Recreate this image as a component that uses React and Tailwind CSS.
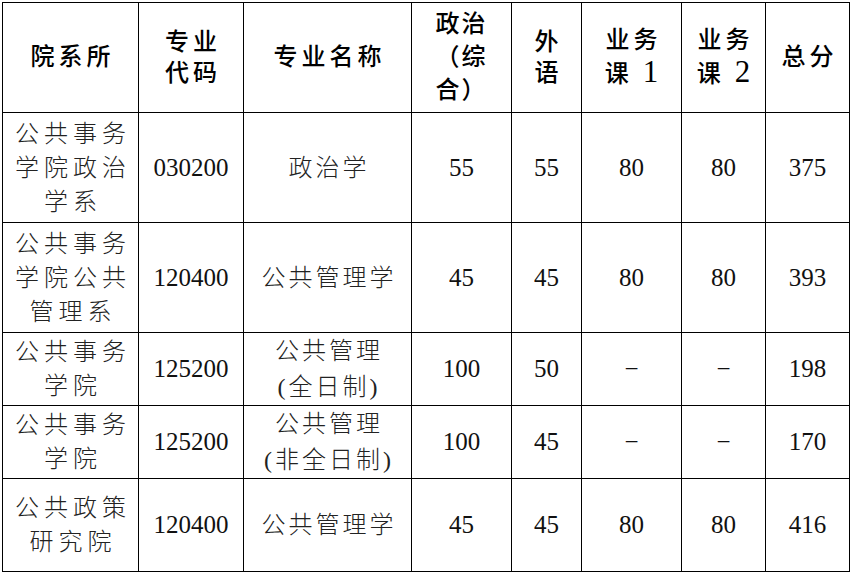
import React from "react";

const CJK = { fontFamily: '"Liberation Serif", "Noto Sans CJK SC", serif' };

function H({ lines }) {
  return (
    <div className="bg-white flex items-center justify-center text-center text-black">
      <div
        className="text-[24px] leading-[31px] font-medium tracking-[4px] pl-[4px]"
        style={CJK}
      >
        {lines.map((l, i) => (
          <div key={i}>{l}</div>
        ))}
      </div>
    </div>
  );
}

function C({ lines, track = "tracking-[3px] pl-[3px]", lh = "leading-[34px]" }) {
  return (
    <div className="bg-white flex items-center justify-center text-center text-[#222]">
      <div className={`text-[24px] font-light ${lh} ${track}`} style={CJK}>
        {lines.map((l, i) => (
          <div key={i}>{l}</div>
        ))}
      </div>
    </div>
  );
}

function N({ v }) {
  return (
    <div className="bg-white flex items-center justify-center text-center text-[#111]">
      <div
        className="text-[25px] leading-[30px]"
        style={{ fontFamily: '"Liberation Serif", serif' }}
      >
        {v}
      </div>
    </div>
  );
}

const rows = [
  {
    dept: ["公共事务", "学院政治", "学系"],
    code: "030200",
    name: ["政治学"],
    s: ["55", "55", "80", "80", "375"],
  },
  {
    dept: ["公共事务", "学院公共", "管理系"],
    code: "120400",
    name: ["公共管理学"],
    s: ["45", "45", "80", "80", "393"],
  },
  {
    dept: ["公共事务", "学院"],
    code: "125200",
    name: ["公共管理", "(全日制)"],
    s: ["100", "50", "−", "−", "198"],
  },
  {
    dept: ["公共事务", "学院"],
    code: "125200",
    name: ["公共管理", "(非全日制)"],
    s: ["100", "45", "−", "−", "170"],
  },
  {
    dept: ["公共政策", "研究院"],
    code: "120400",
    name: ["公共管理学"],
    s: ["45", "45", "80", "80", "416"],
  },
];

function Course({ n }) {
  return (
    <H
      lines={[
        "业务",
        <span key="b">
          课 <span className="text-[31px] leading-[31px] font-normal">{n}</span>
        </span>,
      ]}
    />
  );
}

export default function App() {
  return (
    <div className="w-[853px] h-[576px] bg-white pt-[2px] pl-[2px]">
      <div className="grid w-fit bg-black p-px gap-px grid-cols-[135px_104px_167px_99px_69px_99px_83px_83px] grid-rows-[109px_109px_109px_72px_72px_92px]">
        <H lines={["院系所"]} />
        <H lines={["专业", "代码"]} />
        <H lines={["专业名称"]} />
        <div className="bg-white flex items-center justify-center text-black">
          <div
            className="text-[24px] leading-[33px] font-medium tracking-[2px] text-left"
            style={CJK}
          >
            <div>政治</div>
            <div>（综</div>
            <div>合）</div>
          </div>
        </div>
        <H lines={["外", "语"]} />
        <Course n="1" />
        <Course n="2" />
        <H lines={["总分"]} />
        {rows.map((r, i) => (
          <React.Fragment key={i}>
            <C lines={r.dept} track="tracking-[5px] pl-[5px]" />
            <N v={r.code} />
            <C lines={r.name} lh="leading-[36px]" />
            {r.s.map((v, j) => (
              <N key={j} v={v} />
            ))}
          </React.Fragment>
        ))}
      </div>
    </div>
  );
}
